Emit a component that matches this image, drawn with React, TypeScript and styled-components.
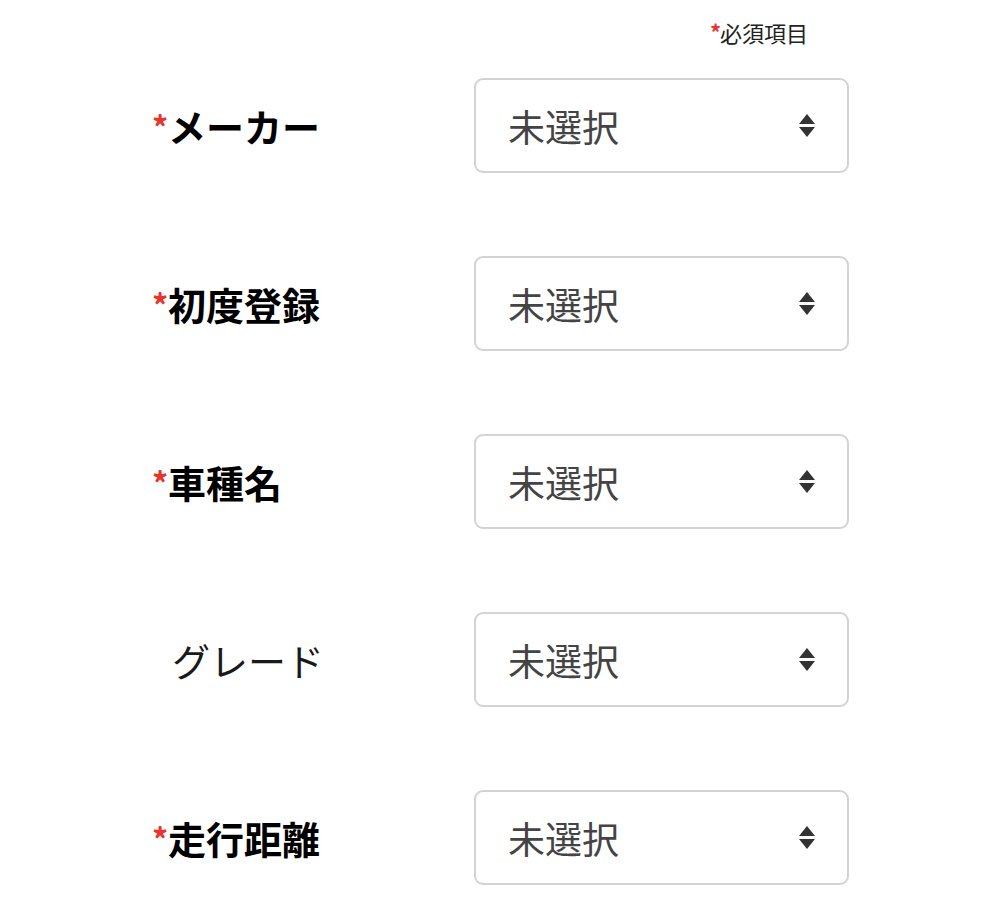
import React from "react";
import styled, { createGlobalStyle } from "styled-components";

const GlobalStyle = createGlobalStyle`
  html, body {
    margin: 0;
    padding: 0;
    background: #ffffff;
  }
  body {
    font-family: "Noto Sans CJK JP", "Noto Sans", sans-serif;
    color: #111;
  }
`;

const Page = styled.div`
  width: 1000px;
  padding: 0 0 0 152px;
  box-sizing: border-box;
`;

const Note = styled.div`
  width: 697px;
  box-sizing: border-box;
  padding: 16px 41px 0 0;
  display: flex;
  justify-content: flex-end;
  align-items: center;
  font-size: 22px;
  line-height: 32px;
  color: #222;
`;

const Mark = styled.span`
  color: #e8352c;
  font-size: 22px;
  font-weight: 700;
  width: 10px;
  line-height: 1;
  align-self: flex-start;
  margin-top: 4px;
`;

const Form = styled.div`
  display: flex;
  flex-direction: column;
  gap: 83px;
  margin-top: 30px;
`;

const Row = styled.div`
  display: grid;
  grid-template-columns: 322px 375px;
  align-items: center;
`;

const Label = styled.div<{ $required: boolean }>`
  display: flex;
  align-items: center;
  font-size: 38px;
  line-height: 48px;
  font-weight: ${(p) => (p.$required ? 700 : 400)};
  color: ${(p) => (p.$required ? "#000" : "#1a1a1a")};
  padding-left: ${(p) => (p.$required ? 0 : 20)}px;
  white-space: nowrap;
`;

const Asterisk = styled.span`
  color: #e8352c;
  font-size: 32px;
  font-weight: 700;
  width: 16px;
  align-self: flex-start;
  line-height: 32px;
  margin-top: 8px;
`;

const Select = styled.div`
  height: 95px;
  box-sizing: border-box;
  border: 2px solid #d3d3d3;
  border-radius: 9px;
  display: flex;
  align-items: center;
  justify-content: space-between;
  padding: 0 31px 0 32px;
  font-size: 37px;
  color: #444;
  background: #fff;
`;

const Arrows = styled.svg`
  width: 18px;
  height: 26px;
  display: block;
`;

const SortIcon = () => (
  <Arrows viewBox="0 0 18 26">
    <polygon points="9,1 17,11 1,11" fill="#333" />
    <polygon points="1,14 17,14 9,24" fill="#333" />
  </Arrows>
);

const fields = [
  { label: "メーカー", required: true },
  { label: "初度登録", required: true },
  { label: "車種名", required: true },
  { label: "グレード", required: false },
  { label: "走行距離", required: true },
];

export default function App() {
  return (
    <Page>
      <GlobalStyle />
      <Note>
        <Mark>*</Mark>必須項目
      </Note>
      <Form>
        {fields.map((f) => (
          <Row key={f.label}>
            <Label $required={f.required}>
              {f.required && <Asterisk>*</Asterisk>}
              {f.label}
            </Label>
            <Select>
              <span>未選択</span>
              <SortIcon />
            </Select>
          </Row>
        ))}
      </Form>
    </Page>
  );
}
